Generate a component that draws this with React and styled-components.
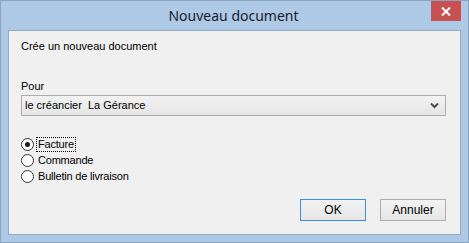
import React from "react";
import styled, { createGlobalStyle } from "styled-components";

const GlobalStyle = createGlobalStyle`
  html, body {
    margin: 0;
    padding: 0;
    background: #ffffff;
  }
  body {
    font-family: "Liberation Sans", Arial, sans-serif;
  }
`;

function App() {
  return (
    <>
      <GlobalStyle />
      <Window>
        <TitleBar>
          <span />
          <Title>Nouveau document</Title>
          <CloseButton aria-label="Fermer">
            <svg width="10" height="9" viewBox="0 0 10 9">
              <path d="M1 0.5 L9 8.5 M9 0.5 L1 8.5" stroke="#fff" strokeWidth="2" />
            </svg>
          </CloseButton>
        </TitleBar>
        <Content>
          <Intro>Crée un nouveau document</Intro>
          <Field>
            <Label>Pour</Label>
            <Select>
              <span>le créancier&nbsp; La Gérance</span>
              <svg width="9" height="7" viewBox="0 0 9 7">
                <path d="M1 1.5 L4.5 5 L8 1.5" stroke="#4d4d4d" strokeWidth="2" fill="none" />
              </svg>
            </Select>
          </Field>
          <RadioList>
            <RadioRow>
              <Radio checked />
              <RadioText focused>Facture</RadioText>
            </RadioRow>
            <RadioRow>
              <Radio />
              <RadioText>Commande</RadioText>
            </RadioRow>
            <RadioRow>
              <Radio />
              <RadioText>Bulletin de livraison</RadioText>
            </RadioRow>
          </RadioList>
          <Actions>
            <Button primary>OK</Button>
            <Button>Annuler</Button>
          </Actions>
        </Content>
      </Window>
    </>
  );
}

const Window = styled.div`
  width: 469px;
  height: 243px;
  box-sizing: border-box;
  border: 1px solid #8aa4c2;
  background: #adc9e6;
  padding: 0 7px 7px 7px;
  display: flex;
  flex-direction: column;
`;

const TitleBar = styled.div`
  height: 29px;
  display: grid;
  grid-template-columns: 1fr auto 1fr;
  align-items: start;
`;

const Title = styled.div`
  font-family: "Noto Sans", "Open Sans", sans-serif;
  font-size: 14px;
  line-height: 29px;
  color: #1b1b2e;
  padding-right: 2px;
`;

const CloseButton = styled.div`
  justify-self: end;
  width: 30px;
  height: 20px;
  background: #c75050;
  display: flex;
  align-items: center;
  justify-content: center;
`;

const Content = styled.div`
  flex: 1;
  box-sizing: border-box;
  border: 1px solid #94abc6;
  background: #f0f0f0;
  padding: 9px 14px 13px 12px;
  display: flex;
  flex-direction: column;
  font-size: 11px;
  color: #000;
`;

const Intro = styled.div`
  line-height: 13px;
`;

const Field = styled.div`
  margin-top: 27px;
  display: flex;
  flex-direction: column;
  gap: 2px;
`;

const Label = styled.div`
  line-height: 13px;
`;

const Select = styled.div`
  height: 21px;
  box-sizing: border-box;
  border: 1px solid #acacac;
  background: linear-gradient(#f2f2f2, #e6e6e6);
  display: flex;
  align-items: center;
  justify-content: space-between;
  padding: 0 6px 0 3px;
  span {
    line-height: 13px;
  }
`;

const RadioList = styled.div`
  margin-top: 20px;
  display: flex;
  flex-direction: column;
`;

const RadioRow = styled.div`
  height: 16px;
  display: flex;
  align-items: center;
  gap: 3px;
`;

const Radio = styled.span`
  width: 13px;
  height: 13px;
  box-sizing: border-box;
  border-radius: 50%;
  border: 1px solid #333333;
  background: #ffffff;
  display: flex;
  align-items: center;
  justify-content: center;
  &::after {
    content: "";
    width: 5px;
    height: 5px;
    border-radius: 50%;
    background: ${(p) => (p.checked ? "#1a1a1a" : "transparent")};
  }
`;

const RadioText = styled.span`
  line-height: 13px;
  padding: 0 1px;
  letter-spacing: -0.2px;
  outline: ${(p) => (p.focused ? "1px dotted #000" : "none")};
`;

const Actions = styled.div`
  margin-top: auto;
  display: flex;
  justify-content: flex-end;
  gap: 14px;
`;

const Button = styled.div`
  width: 66px;
  height: 22px;
  box-sizing: border-box;
  border: 1px solid ${(p) => (p.primary ? "#3c8de0" : "#acacac")};
  background: linear-gradient(#f2f2f2, #e6e6e6);
  display: flex;
  align-items: center;
  justify-content: center;
  font-size: 12px;
`;

export default App;
